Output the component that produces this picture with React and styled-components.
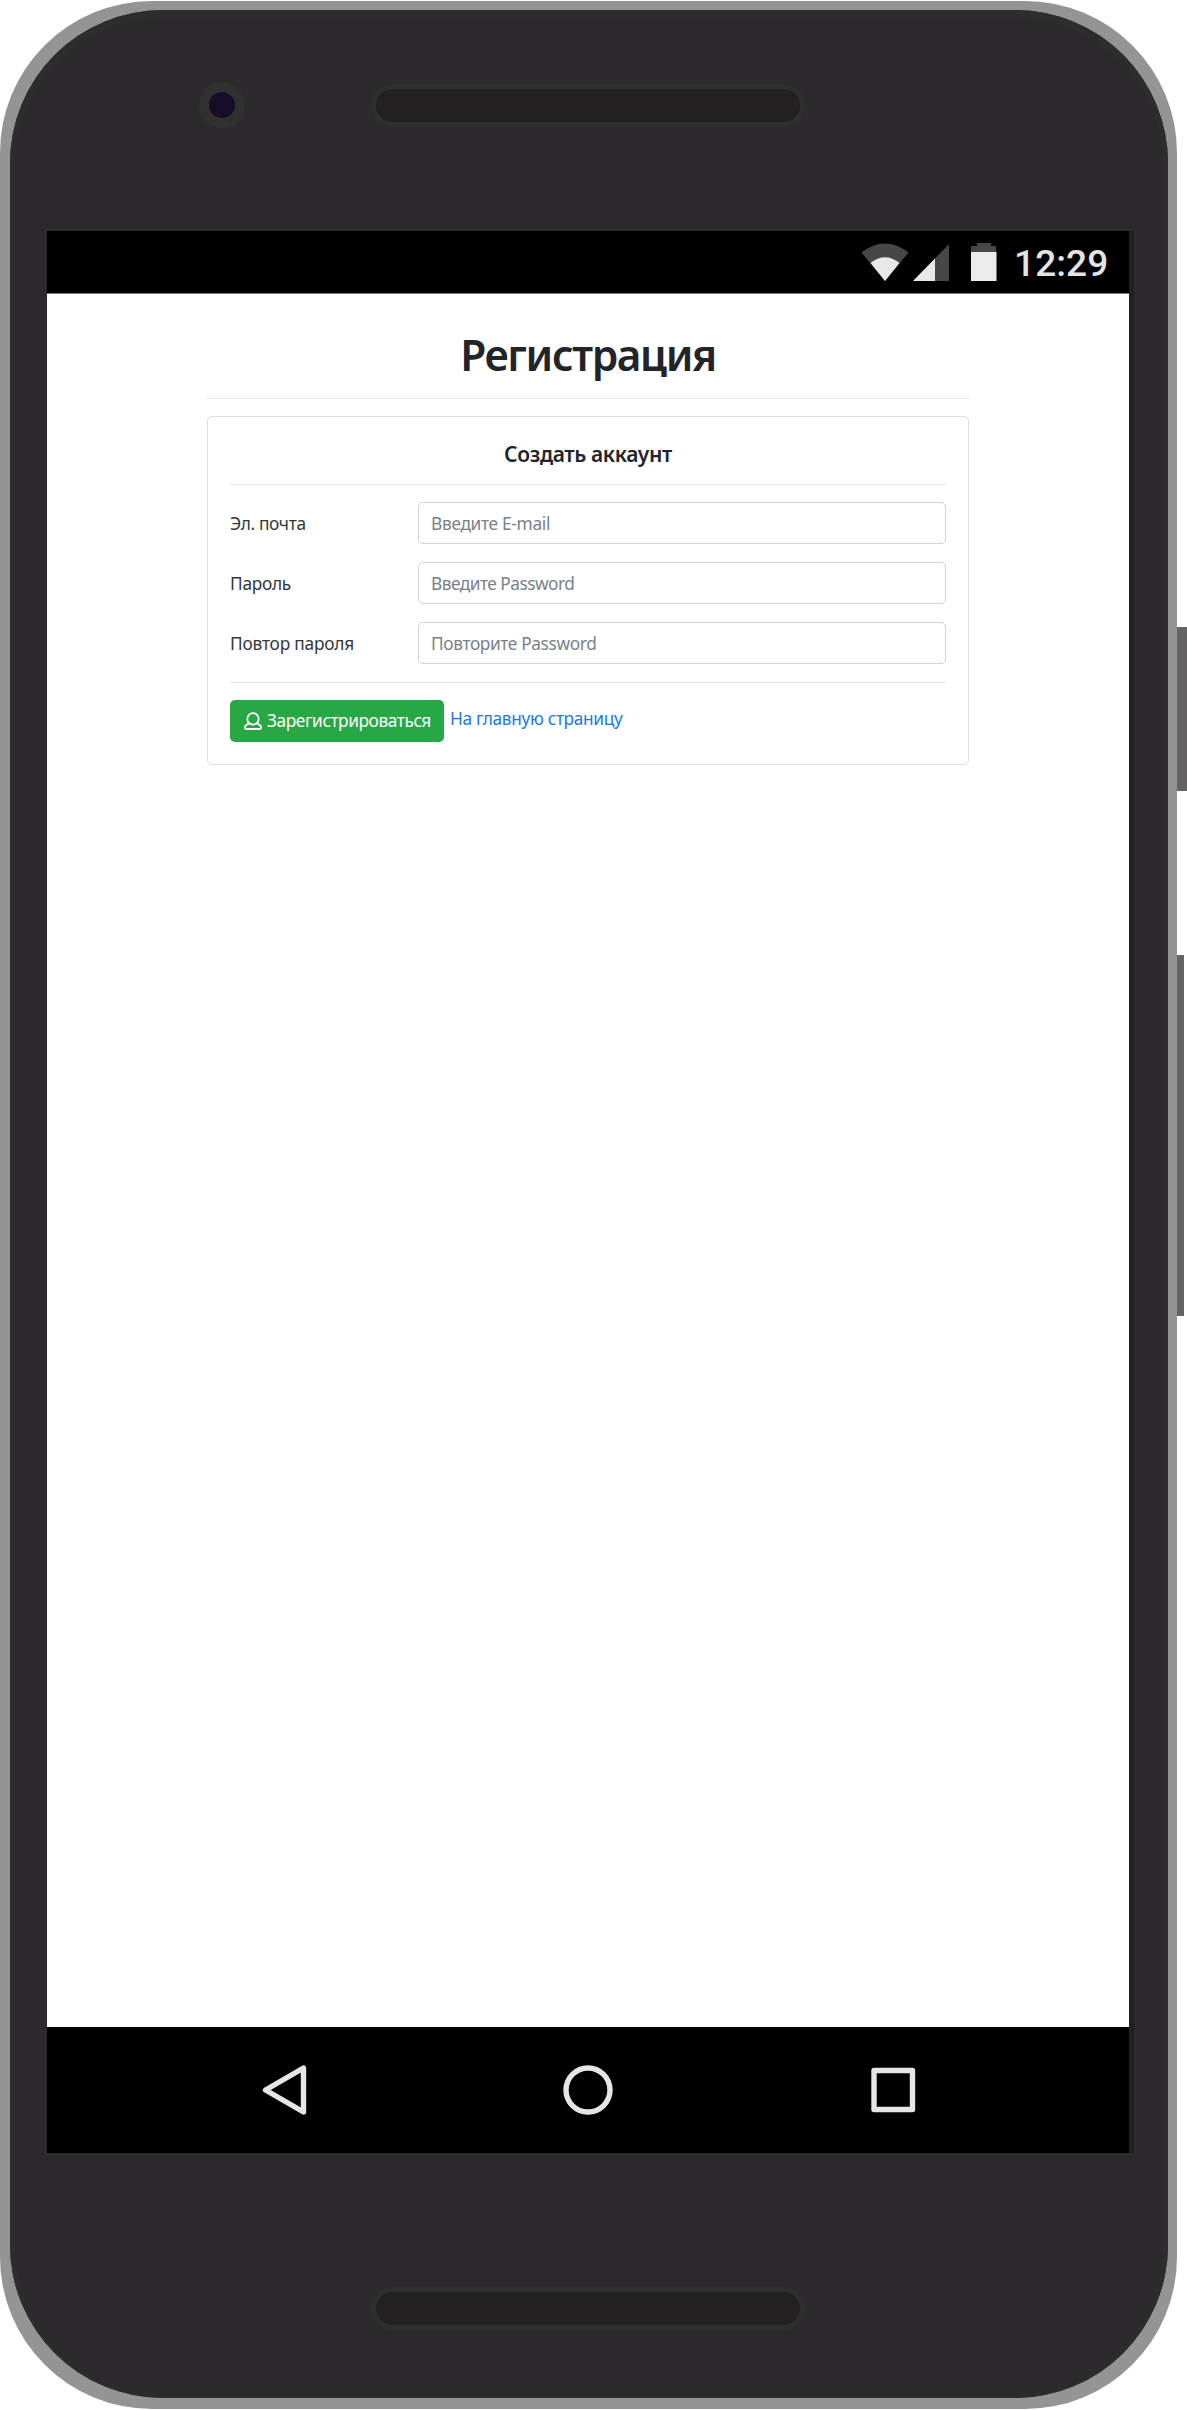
import React from 'react';
import styled, { createGlobalStyle } from 'styled-components';

const GlobalStyle = createGlobalStyle`
  *, *::before, *::after { box-sizing: border-box; }
  body {
    margin: 0;
    background: #fff;
    font-family: "Noto Sans", "Open Sans", sans-serif;
    color: #212529;
  }
`;

const Stage = styled.div`
  display: flex;
  width: 1187px;
  height: 2410px;
  padding-top: 1px;
  overflow: hidden;
`;

const Frame = styled.div`
  flex: none;
  width: 1177px;
  height: 2408px;
  padding: 9px 9px 11px 10px;
  border-radius: 152px;
  background: #949494;
`;

const Body = styled.div`
  display: flex;
  flex-direction: column;
  width: 100%;
  height: 100%;
  border-radius: 153px;
  background: #2d2a2d;
  box-shadow: inset 0 3px 0 5px #2c2d2c;
`;

const TopBezel = styled.div`
  flex: none;
  display: flex;
  align-items: flex-start;
  height: 221px;
  padding: 72px 0 0 189px;
`;

const Camera = styled.div`
  width: 46px;
  height: 46px;
  margin-right: 126px;
  border: 10px solid #303130;
  border-radius: 50%;
  background: #180d27;
`;

const Speaker = styled.div`
  width: 434px;
  height: 43px;
  margin-top: ${({ $offset }) => $offset}px;
  border: 5px solid #2e2f2e;
  border-radius: 22px;
  background: #232122;
`;

const BottomBezel = styled.div`
  flex: 1;
  display: flex;
  align-items: flex-start;
  padding-left: 361px;
`;

const Screen = styled.div`
  flex: none;
  display: flex;
  flex-direction: column;
  width: 1087px;
  height: 1922px;
  margin-left: 37px;
  border-right: 5px solid #202120;
  background: #fff;
`;

const StatusBar = styled.div`
  flex: none;
  display: flex;
  align-items: flex-start;
  justify-content: flex-end;
  height: 63px;
  padding: 12px 20px 0 0;
  border-bottom: 1px solid #777;
  background: #000;
`;

const StatusIcon = styled.svg`
  flex: none;
  display: block;
  height: 38px;
  width: ${({ $w }) => $w}px;
  margin-right: ${({ $gap }) => $gap}px;
`;

const Clock = styled.div`
  width: 95px;
  padding-top: 1px;
  font: 500 37px/40px Roboto, sans-serif;
  letter-spacing: 0.1px;
  color: #e4e4e4;
  white-space: nowrap;
`;

const Page = styled.main`
  flex: 1;
  width: 762px;
  margin-left: 160px;
  padding-top: 35px;
`;

const Title = styled.h1`
  margin: 0;
  font-size: 42.4px;
  font-weight: 600;
  line-height: 52px;
  letter-spacing: -1.36px;
  text-align: center;
`;

const Rule = styled.hr`
  height: 1px;
  margin: ${({ $m }) => $m};
  border: 0;
  background: #e6e7e7;
`;

const Card = styled.section`
  height: 349px;
  padding: 24px 22px 22px;
  border: 1px solid #dfe0e1;
  border-radius: 5px;
`;

const CardTitle = styled.h2`
  margin: 0;
  font-size: 21px;
  font-weight: 600;
  line-height: 26px;
  letter-spacing: -0.37px;
  text-align: center;
`;

const Field = styled.label`
  display: grid;
  grid-template-columns: 188px 1fr;
  align-items: center;
  height: 42px;
  margin-bottom: 18px;
  color: #33373b;
  font-size: 17.3px;
  letter-spacing: ${({ $ls }) => $ls}px;
`;

const Input = styled.input`
  width: 100%;
  height: 42px;
  padding: 0 13px 0 12px;
  border: 1px solid #ced4da;
  border-radius: 5px;
  background: #fff;
  font: inherit;
  letter-spacing: ${({ $ls }) => $ls}px;
  outline: 0;

  &::placeholder {
    color: #788188;
    opacity: 1;
  }
`;

const Actions = styled.div`
  display: flex;
  align-items: flex-start;
`;

const SubmitButton = styled.button`
  display: flex;
  align-items: center;
  width: 214px;
  height: 42px;
  margin-right: 6px;
  padding: 0 0 0 14px;
  border: 0;
  border-radius: 5px;
  background: #28a745;
  color: #fff;
  font: 400 17.3px/24px "Noto Sans", sans-serif;
  letter-spacing: -0.42px;
  white-space: nowrap;
`;

const UserIcon = styled.svg`
  flex: none;
  width: 18px;
  height: 18px;
  margin-right: 5px;
`;

const HomeLink = styled.a`
  padding-top: 6px;
  color: #1a7ae0;
  font-size: 17.3px;
  line-height: 26px;
  letter-spacing: -0.32px;
  text-decoration: none;
  white-space: nowrap;
`;

const NavBar = styled.nav`
  flex: none;
  display: flex;
  align-items: center;
  justify-content: center;
  gap: 254.5px;
  height: 126px;
  background: #000;
`;

const NavIcon = styled.svg`
  flex: none;
  width: 50px;
  height: 50px;
  fill: none;
  stroke: #e6e6e6;
  stroke-width: 5.4;
  stroke-linejoin: round;
`;

const SideKeys = styled.div`
  flex: none;
  display: flex;
  flex-direction: column;
  gap: 164px;
  width: 10px;
  padding-top: 626px;
`;

const SideKey = styled.div`
  width: ${({ $w }) => $w}px;
  height: ${({ $h }) => $h}px;
  background: #656263;
`;

const FIELDS = [
  { label: 'Эл. почта', hint: 'Введите E-mail', type: 'email', ls: -0.33, hintLs: -0.3 },
  { label: 'Пароль', hint: 'Введите Password', type: 'password', ls: -0.29, hintLs: -0.51 },
  { label: 'Повтор пароля', hint: 'Повторите Password', type: 'password', ls: -0.2, hintLs: -0.36 },
];

export default function App() {
  return (
    <>
      <GlobalStyle />
      <Stage>
        <Frame>
          <Body>
            <TopBezel>
              <Camera />
              <Speaker $offset={2} />
            </TopBezel>
            <Screen>
              <StatusBar>
                <StatusIcon $w={48} $gap={4} viewBox="0 0 48 38">
                  <path d="M0.5 9.5Q24 -8.5 47.5 9.5L24 38Z" fill="#474747" />
                  <path d="M9.5 20Q24 8.5 38.5 20L24 38Z" fill="#e8e8e8" />
                </StatusIcon>
                <StatusIcon $w={36} $gap={22} viewBox="0 0 36 38">
                  <path d="M36 1V38H0Z" fill="#474747" />
                  <path d="M22 15.4V38H0Z" fill="#e8e8e8" />
                </StatusIcon>
                <StatusIcon $w={26} $gap={17} viewBox="0 0 26 38">
                  <path d="M6 0H20V3H25V10H0V3H6Z" fill="#474747" />
                  <path d="M0 9H25.5V38H0Z" fill="#ebebeb" />
                </StatusIcon>
                <Clock>12:29</Clock>
              </StatusBar>
              <Page>
                <Title>Регистрация</Title>
                <Rule $m="17px 0" />
                <Card>
                  <CardTitle>Создать аккаунт</CardTitle>
                  <Rule $m="17px 0" />
                  {FIELDS.map((f) => (
                    <Field key={f.label} $ls={f.ls}>
                      {f.label}
                      <Input type={f.type} placeholder={f.hint} $ls={f.hintLs} />
                    </Field>
                  ))}
                  <Rule $m="0 0 17px" />
                  <Actions>
                    <SubmitButton type="button">
                      <UserIcon viewBox="0 0 18 18" fill="none" stroke="#fff" strokeWidth="1.8" strokeLinejoin="round">
                        <path d="M5.3 11.2C3.7 12.4 0.9 12.8 0.9 15.5Q0.9 17 2.2 17H15.8Q17.1 17 17.1 15.5C17.1 12.8 14.3 12.4 12.7 11.2" />
                        <circle cx="9" cy="6.9" r="5.7" />
                      </UserIcon>
                      Зарегистрироваться
                    </SubmitButton>
                    <HomeLink href="#">На главную страницу</HomeLink>
                  </Actions>
                </Card>
              </Page>
              <NavBar>
                <NavIcon viewBox="0 0 50 50">
                  <path d="M6.5 25L44.5 3V47Z" />
                </NavIcon>
                <NavIcon viewBox="0 0 50 50">
                  <circle cx="25" cy="25" r="22" />
                </NavIcon>
                <NavIcon viewBox="0 0 50 50">
                  <rect x="6" y="5.5" width="38.5" height="39" />
                </NavIcon>
              </NavBar>
            </Screen>
            <BottomBezel>
              <Speaker $offset={134} />
            </BottomBezel>
          </Body>
        </Frame>
        <SideKeys>
          <SideKey $w={10} $h={164} />
          <SideKey $w={7} $h={361} />
        </SideKeys>
      </Stage>
    </>
  );
}
